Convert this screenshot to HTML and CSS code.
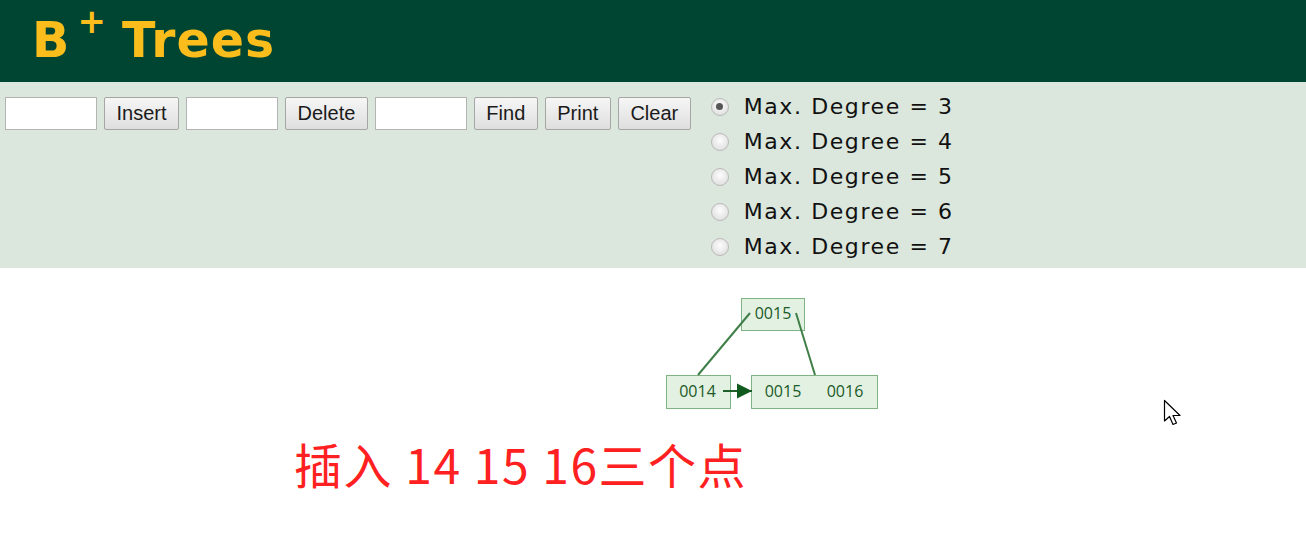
FILE: index.html
```html
<!DOCTYPE html>
<html>
<head>
<meta charset="utf-8">
<link rel="stylesheet" href="styles.css">
</head>
<body>
<header class="banner">
  <h1 class="title">B<sup class="plus">+</sup>Trees</h1>
</header>
<section class="controls">
  <div class="actions">
    <input class="field" type="text">
    <button class="btn">Insert</button>
    <input class="field" type="text">
    <button class="btn">Delete</button>
    <input class="field" type="text">
    <button class="btn">Find</button>
    <button class="btn">Print</button>
    <button class="btn">Clear</button>
  </div>
  <div class="degrees">
    <label class="opt"><span class="radio on"></span>Max. Degree = 3</label>
    <label class="opt"><span class="radio"></span>Max. Degree = 4</label>
    <label class="opt"><span class="radio"></span>Max. Degree = 5</label>
    <label class="opt"><span class="radio"></span>Max. Degree = 6</label>
    <label class="opt"><span class="radio"></span>Max. Degree = 7</label>
  </div>
</section>
<main class="canvas">
  <svg class="tree" width="240" height="130" viewBox="0 0 240 130">
    <defs>
      <marker id="arr" markerWidth="16" markerHeight="16" refX="15" refY="8" orient="auto" markerUnits="userSpaceOnUse">
        <path d="M0,0.5 L15,8 L0,15.5 z" fill="#0f5a1c"/>
      </marker>
    </defs>
    <rect x="90.5" y="13.5" width="63" height="32" fill="#e3f1e3" stroke="#7fb383"/>
    <text x="122" y="34" class="key" text-anchor="middle">0015</text>
    <rect x="15.5" y="90.5" width="64" height="33" fill="#e3f1e3" stroke="#7fb383"/>
    <text x="46.5" y="112" class="key" text-anchor="middle">0014</text>
    <rect x="100.5" y="90.5" width="126" height="33" fill="#e3f1e3" stroke="#7fb383"/>
    <text x="132" y="112" class="key" text-anchor="middle">0015</text>
    <text x="194" y="112" class="key" text-anchor="middle">0016</text>
    <line x1="99" y1="28" x2="47" y2="90" stroke="#3f7f47" stroke-width="2"/>
    <line x1="145" y1="28" x2="164" y2="90" stroke="#3f7f47" stroke-width="2"/>
    <line x1="72" y1="106" x2="101" y2="106" stroke="#1f5f2a" stroke-width="2" marker-end="url(#arr)"/>
  </svg>
  <p class="note">插入 14 15 16三个点</p>
  <svg class="cursor" width="22" height="30" viewBox="0 0 22 30">
    <path d="M1.5,1.5 L1.5,22 L6.5,17.5 L10,25.5 L13.5,24 L10,16.5 L17,16.5 Z" fill="#fff" stroke="#000" stroke-width="1.2" stroke-linejoin="round"/>
  </svg>
</main>
</body>
</html>
```

FILE: styles.css
```css
html, body {
  margin: 0;
  padding: 0;
  background: #ffffff;
}
body {
  width: 1306px;
  height: 557px;
  overflow: hidden;
  font-family: "Liberation Sans", Arial, sans-serif;
}
.banner {
  height: 82px;
  background: #004432;
  display: flex;
  align-items: center;
  padding-left: 32px;
  box-sizing: border-box;
}
.title {
  margin: 0;
  font-family: "DejaVu Sans", Verdana, sans-serif;
  font-weight: bold;
  font-size: 49px;
  color: #fbbd1c;
  line-height: 1;
  letter-spacing: 1.1px;
  position: relative;
  top: -1px;
}
.plus {
  font-size: 34px;
  vertical-align: top;
  position: relative;
  top: -12px;
  margin-left: 7px;
  margin-right: 15px;
}
.controls {
  height: 186px;
  background: #dbe7dc;
  display: flex;
  align-items: flex-start;
  box-sizing: border-box;
  padding: 15px 0 0 5px;
}
.actions {
  display: flex;
  gap: 7px;
  align-items: center;
}
.field {
  width: 92px;
  height: 33px;
  box-sizing: border-box;
  border: 1px solid #b4b4b4;
  background: #fff;
  margin: 0;
}
.btn {
  height: 33px;
  box-sizing: border-box;
  border: 1px solid #a6a6a6;
  border-radius: 2px;
  background: linear-gradient(#f6f6f6, #dedede);
  font-family: "Liberation Sans", Arial, sans-serif;
  font-size: 20px;
  color: #1a1a1a;
  padding: 0 11.5px;
  margin: 0;
}
.degrees {
  display: flex;
  flex-direction: column;
  margin-left: 20px;
  margin-top: -8px;
}
.opt {
  display: flex;
  align-items: center;
  height: 35px;
  font-family: "DejaVu Sans", Verdana, sans-serif;
  font-size: 22px;
  color: #111;
  letter-spacing: 1.6px;
}
.radio {
  width: 18px;
  height: 18px;
  border-radius: 50%;
  border: 1px solid #b9b9b9;
  background: radial-gradient(circle at 50% 40%, #fdfdfd, #d8d8d8);
  box-sizing: border-box;
  margin-right: 15px;
  display: flex;
  align-items: center;
  justify-content: center;
}
.radio.on::after {
  content: "";
  width: 7px;
  height: 7px;
  border-radius: 50%;
  background: #555;
}
.canvas {
  position: relative;
  height: 289px;
  padding-top: 17px;
  box-sizing: border-box;
}
.tree {
  display: block;
  margin-left: 651px;
}
.key {
  font-family: "Open Sans", "DejaVu Sans", sans-serif;
  font-size: 16px;
  fill: #1a5a27;
}
.note {
  margin: 24px 0 0 294px;
  font-family: "Noto Sans CJK SC", "Liberation Sans", sans-serif;
  font-size: 48px;
  line-height: 1;
  letter-spacing: 1.5px;
  color: #ff2121;
}
.cursor {
  position: absolute;
  left: 1163px;
  top: 131px;
}
```
